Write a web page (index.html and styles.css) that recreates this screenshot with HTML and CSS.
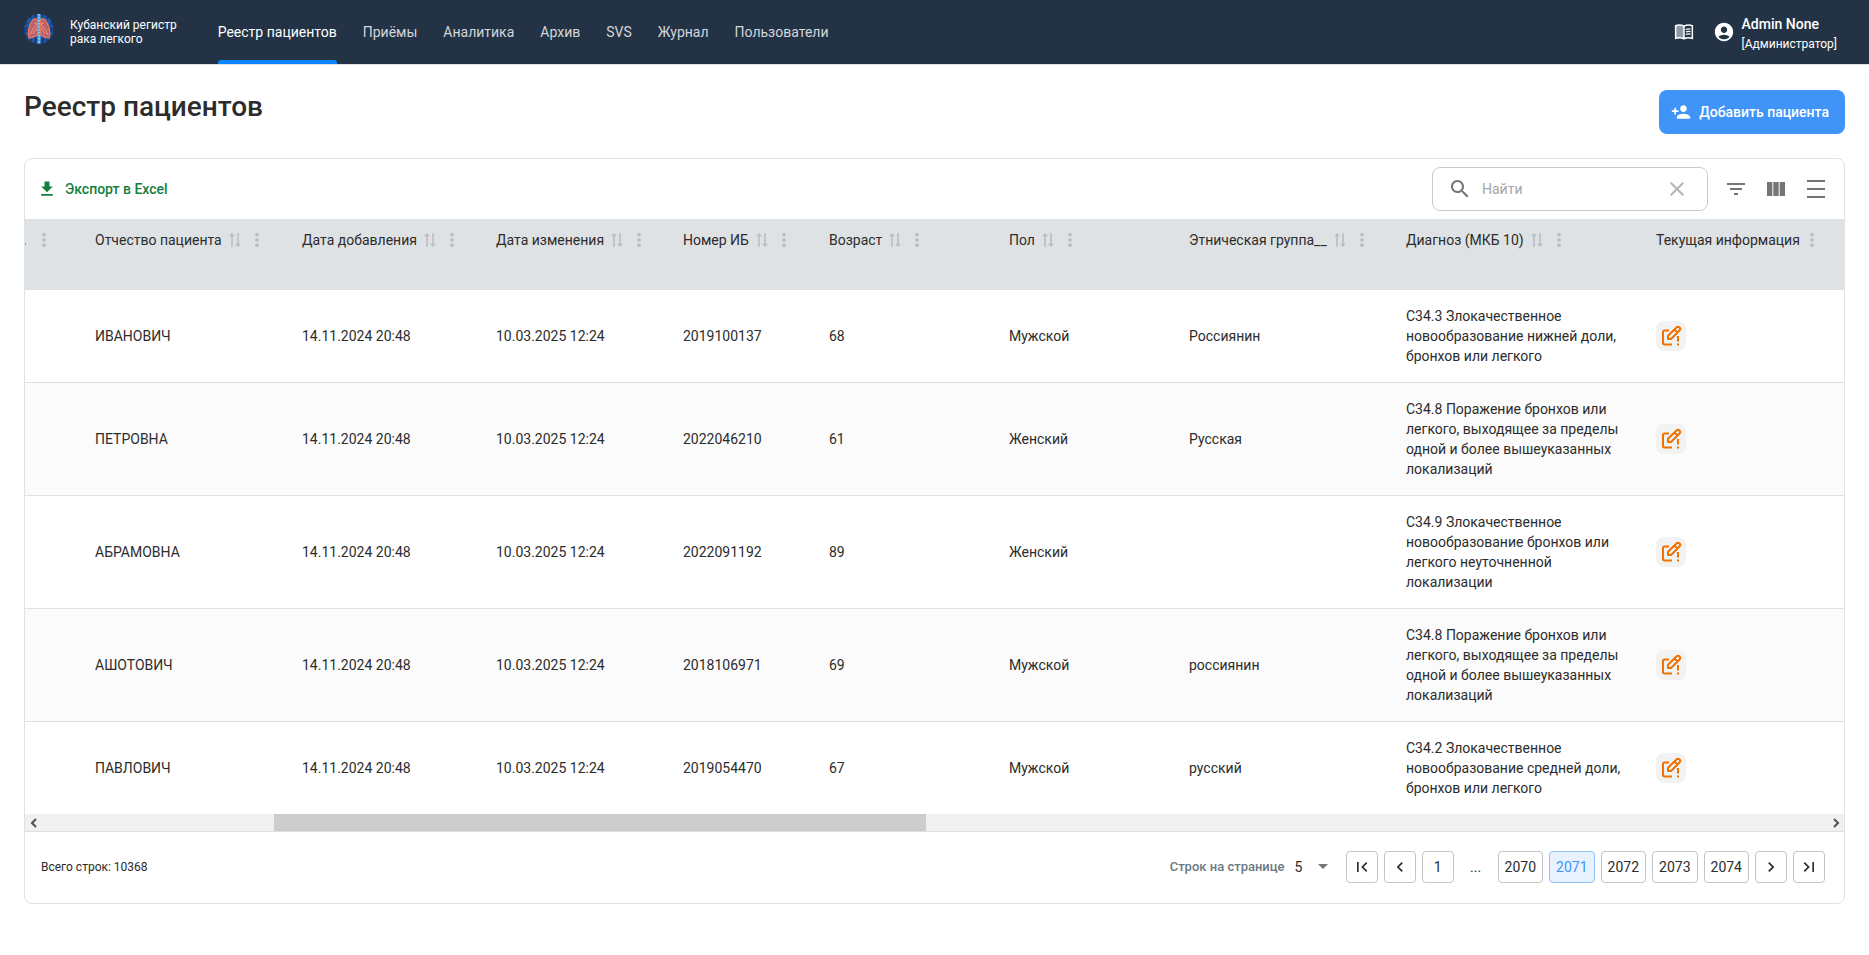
FILE: index.html
```html
<!DOCTYPE html>
<html lang="ru">
<head>
<meta charset="utf-8">
<meta name="viewport" content="width=device-width, initial-scale=1">
<title>Реестр пациентов</title>
<link rel="stylesheet" href="styles.css">
</head>
<body>
<svg class="sprite" aria-hidden="true">
  <symbol id="i-sort" viewBox="0 0 12 16"><path d="M3 15V2M9 1v13" fill="none" stroke="currentColor" stroke-width="1.5"/><path d="M0 4.200 3 1l3 3.200zM6 11.800h6L9 15z" fill="currentColor"/></symbol>
  <symbol id="i-more" viewBox="0 0 24 24"><circle cx="12" cy="5.800" r="2.200"/><circle cx="12" cy="12" r="2.200"/><circle cx="12" cy="18.200" r="2.200"/></symbol>
  <symbol id="i-edit" viewBox="0 0 30 30"><g fill="none" stroke="currentColor" stroke-width="2" stroke-linejoin="round"><path d="M13 9.500H8.500A1.500 1.500 0 0 0 7 11v11a1.500 1.500 0 0 0 1.500 1.500H16M22 15v5.500M22 22.500v2"/><path d="m12 14.700 8.500-8.200a2.100 2.100 0 0 1 3 3L15 18h-3zM18.500 8.500l3 3"/></g></symbol>
  <symbol id="i-left" viewBox="0 0 24 24"><path d="M15.410 7.410 14 6l-6 6 6 6 1.410-1.410L10.830 12z"/></symbol>
  <symbol id="i-right" viewBox="0 0 24 24"><path d="M10 6 8.590 7.410 13.170 12l-4.580 4.590L10 18l6-6z"/></symbol>
</svg>

<header class="topbar">
  <a class="brand" href="#">
    <svg class="logo" viewBox="0 0 30 30" aria-hidden="true">
      <defs><clipPath id="disc"><circle cx="15" cy="15" r="15"/></clipPath></defs>
      <g clip-path="url(#disc)">
        <rect width="30" height="30" fill="#174384"/>
        <path d="M3 8c6-5 18-5 24 0M1 13c7-6 21-6 28 0M2 25c7-3 19-3 26 0M1 20c8-4 20-4 28 0M5 4v23M25 4v23M9 1v28M21 1v28" fill="none" stroke="#2968b3" stroke-width="1.200"/>
        <path d="M15 0v30" stroke="#4f9bdc" stroke-width="3.500"/>
        <path d="M15 0v30" stroke="#9acdf0" stroke-width="1.800" stroke-dasharray="1.500 1.500"/>
        <path d="M12.500 5C8 4 4 13 4.200 21c0 3 2 3.300 4.200 2.200 2.500-1 5-1 5-3.700V7c0-1-.3-1.800-.9-2zM17.500 5c4.500-1 8.500 8 8.300 16 0 3-2 3.300-4.200 2.200-2.500-1-5-1-5-3.700V7c0-1 .3-1.800.9-2z" fill="#b9606e" stroke="#f0765a" stroke-width="1.300"/>
        <path d="m13 10-4 5-3 6M12.500 14 9 20M13 10l-3-1M17 10l4 5 3 6M17.500 14l3.500 6M17 10l3-1" fill="none" stroke="#ff9a70" stroke-width=".9"/>
      </g>
    </svg>
    <span class="brand-name">Кубанский регистр<br>рака легкого</span>
  </a>
  <nav class="nav" aria-label="Основное меню">
    <a class="nav-link active" href="#" aria-current="page">Реестр пациентов</a>
    <a class="nav-link" href="#">Приёмы</a>
    <a class="nav-link" href="#">Аналитика</a>
    <a class="nav-link" href="#">Архив</a>
    <a class="nav-link" href="#">SVS</a>
    <a class="nav-link" href="#">Журнал</a>
    <a class="nav-link" href="#">Пользователи</a>
  </nav>
  <div class="account">
    <button class="bare" type="button" aria-label="Справочник">
      <svg class="ic20" viewBox="0 0 24 24" aria-hidden="true"><path d="M2 4.500c3.500-1.400 7-1.200 10 .4v15c-3-1.500-6.500-1.500-10 0z" fill="#8e99a8"/><path d="M12 5c3.200-1.700 6.700-1.900 10-.5v15.200c-3.300-1.200-6.800-1.200-10 .4-3.200-1.600-6.700-1.600-10-.4V4.500C5.300 3.100 8.800 3.300 12 5zv15" fill="none" stroke="currentColor" stroke-width="1.800"/><path d="M14.200 9c2-.7 3.800-.8 5.600-.4M14.200 12c2-.7 3.800-.8 5.600-.4M14.200 15c2-.7 3.800-.8 5.600-.4" fill="none" stroke="currentColor" stroke-width="1.500"/></svg>
    </button>
    <button class="bare user" type="button">
      <svg class="ic22" viewBox="0 0 24 24" aria-hidden="true"><path fill="currentColor" d="M12 2C6.480 2 2 6.480 2 12s4.480 10 10 10 10-4.480 10-10S17.520 2 12 2zm0 4c1.930 0 3.500 1.570 3.500 3.500S13.930 13 12 13s-3.500-1.570-3.500-3.500S10.070 6 12 6zm0 14c-2.030 0-4.430-.82-6.140-2.880C7.550 15.800 9.680 15 12 15s4.450.8 6.140 2.120C16.430 19.180 14.030 20 12 20z"/></svg>
      <span class="user-text"><span class="user-name">Admin None</span><span class="user-role">[Администратор]</span></span>
    </button>
  </div>
</header>

<main class="page">
  <div class="page-head">
    <h1>Реестр пациентов</h1>
    <button class="primary" type="button">
      <svg class="ic20" viewBox="0 0 24 24" aria-hidden="true"><path fill="currentColor" d="M15 12c2.210 0 4-1.790 4-4s-1.790-4-4-4-4 1.790-4 4 1.790 4 4 4zm-9-2V7H4v3H1v2h3v3h2v-3h3v-2H6zm9 4c-2.670 0-8 1.340-8 4v2h16v-2c0-2.660-5.330-4-8-4z"/></svg>
      Добавить пациента
    </button>
  </div>

  <section class="card">
    <div class="toolbar">
      <button class="export" type="button">
        <svg class="ic20" viewBox="0 0 24 24" aria-hidden="true"><path fill="currentColor" d="M19 9h-4V3H9v6H5l7 7 7-7zM5 18v2h14v-2H5z"/></svg>
        Экспорт в Excel
      </button>
      <div class="tools">
        <div class="search">
          <svg class="ic24" viewBox="0 0 24 24" aria-hidden="true"><path fill="currentColor" d="M15.500 14h-.79l-.28-.27C15.410 12.590 16 11.110 16 9.500 16 5.910 13.090 3 9.500 3S3 5.910 3 9.500 5.910 16 9.500 16c1.610 0 3.090-.59 4.230-1.570l.27.28v.79l5 4.990L20.490 19l-4.990-5zm-6 0C7.010 14 5 11.990 5 9.500S7.010 5 9.500 5 14 7.010 14 9.500 11.990 14 9.500 14z"/></svg>
          <input type="text" placeholder="Найти" aria-label="Найти">
          <button class="bare clear" type="button" aria-label="Очистить"><svg class="ic24" viewBox="0 0 24 24" aria-hidden="true"><path fill="currentColor" d="M19 6.410 17.590 5 12 10.590 6.410 5 5 6.410 10.590 12 5 17.590 6.410 19 12 13.410 17.590 19 19 17.590 13.410 12z"/></svg></button>
        </div>
        <button class="tool" type="button" aria-label="Фильтры"><svg class="ic24" viewBox="0 0 24 24" aria-hidden="true"><path fill="currentColor" d="M10 18h4v-2h-4v2zM3 6v2h18V6H3zm3 7h12v-2H6v2z"/></svg></button>
        <button class="tool" type="button" aria-label="Колонки"><svg class="ic24" viewBox="0 0 24 24" aria-hidden="true"><path fill="currentColor" d="M14.670 5v14H9.330V5h5.340zm1 14H21V5h-5.330v14zm-7.340 0V5H3v14h5.330z"/></svg></button>
        <button class="tool" type="button" aria-label="Плотность"><svg class="ic24" viewBox="0 0 24 24" aria-hidden="true"><path fill="currentColor" d="M3 3h18v2H3zM3 11h18v2H3zM3 19h18v2H3z"/></svg></button>
      </div>
    </div>

    <div class="table-wrap">
      <table>
        <colgroup><col class="c-prev"><col class="c-patronymic"><col class="c-added"><col class="c-changed"><col class="c-number"><col class="c-age"><col class="c-sex"><col class="c-ethnic"><col class="c-diagnosis"><col></colgroup>
        <thead>
          <tr>
            <th class="prev"><div class="th">.<button class="bare dots" type="button" aria-label="Меню колонки"><svg><use href="#i-more"/></svg></button></div></th>
            <th><div class="th">Отчество пациента<button class="bare sort" type="button" aria-label="Сортировать"><svg><use href="#i-sort"/></svg></button><button class="bare dots" type="button" aria-label="Меню колонки"><svg><use href="#i-more"/></svg></button></div></th>
            <th><div class="th">Дата добавления<button class="bare sort" type="button" aria-label="Сортировать"><svg><use href="#i-sort"/></svg></button><button class="bare dots" type="button" aria-label="Меню колонки"><svg><use href="#i-more"/></svg></button></div></th>
            <th><div class="th">Дата изменения<button class="bare sort" type="button" aria-label="Сортировать"><svg><use href="#i-sort"/></svg></button><button class="bare dots" type="button" aria-label="Меню колонки"><svg><use href="#i-more"/></svg></button></div></th>
            <th><div class="th">Номер ИБ<button class="bare sort" type="button" aria-label="Сортировать"><svg><use href="#i-sort"/></svg></button><button class="bare dots" type="button" aria-label="Меню колонки"><svg><use href="#i-more"/></svg></button></div></th>
            <th><div class="th">Возраст<button class="bare sort" type="button" aria-label="Сортировать"><svg><use href="#i-sort"/></svg></button><button class="bare dots" type="button" aria-label="Меню колонки"><svg><use href="#i-more"/></svg></button></div></th>
            <th><div class="th">Пол<button class="bare sort" type="button" aria-label="Сортировать"><svg><use href="#i-sort"/></svg></button><button class="bare dots" type="button" aria-label="Меню колонки"><svg><use href="#i-more"/></svg></button></div></th>
            <th><div class="th">Этническая группа__<button class="bare sort" type="button" aria-label="Сортировать"><svg><use href="#i-sort"/></svg></button><button class="bare dots" type="button" aria-label="Меню колонки"><svg><use href="#i-more"/></svg></button></div></th>
            <th><div class="th">Диагноз (МКБ 10)<button class="bare sort" type="button" aria-label="Сортировать"><svg><use href="#i-sort"/></svg></button><button class="bare dots" type="button" aria-label="Меню колонки"><svg><use href="#i-more"/></svg></button></div></th>
            <th><div class="th">Текущая информация<button class="bare dots" type="button" aria-label="Меню колонки"><svg><use href="#i-more"/></svg></button></div></th>
          </tr>
        </thead>
        <tbody>
          <tr><td></td><td>ИВАНОВИЧ</td><td>14.11.2024 20:48</td><td>10.03.2025 12:24</td><td>2019100137</td><td>68</td><td>Мужской</td><td>Россиянин</td><td>C34.3 Злокачественное новообразование нижней доли, бронхов или легкого</td><td><button class="edit" type="button" aria-label="Редактировать"><svg><use href="#i-edit"/></svg></button></td></tr>
          <tr><td></td><td>ПЕТРОВНА</td><td>14.11.2024 20:48</td><td>10.03.2025 12:24</td><td>2022046210</td><td>61</td><td>Женский</td><td>Русская</td><td>C34.8 Поражение бронхов или легкого, выходящее за пределы одной и более вышеуказанных локализаций</td><td><button class="edit" type="button" aria-label="Редактировать"><svg><use href="#i-edit"/></svg></button></td></tr>
          <tr><td></td><td>АБРАМОВНА</td><td>14.11.2024 20:48</td><td>10.03.2025 12:24</td><td>2022091192</td><td>89</td><td>Женский</td><td></td><td>C34.9 Злокачественное новообразование бронхов или легкого неуточненной локализации</td><td><button class="edit" type="button" aria-label="Редактировать"><svg><use href="#i-edit"/></svg></button></td></tr>
          <tr><td></td><td>АШОТОВИЧ</td><td>14.11.2024 20:48</td><td>10.03.2025 12:24</td><td>2018106971</td><td>69</td><td>Мужской</td><td>россиянин</td><td>C34.8 Поражение бронхов или легкого, выходящее за пределы одной и более вышеуказанных локализаций</td><td><button class="edit" type="button" aria-label="Редактировать"><svg><use href="#i-edit"/></svg></button></td></tr>
          <tr><td></td><td>ПАВЛОВИЧ</td><td>14.11.2024 20:48</td><td>10.03.2025 12:24</td><td>2019054470</td><td>67</td><td>Мужской</td><td>русский</td><td>C34.2 Злокачественное новообразование средней доли, бронхов или легкого</td><td><button class="edit" type="button" aria-label="Редактировать"><svg><use href="#i-edit"/></svg></button></td></tr>
        </tbody>
      </table>
    </div>

    <div class="scrollbar">
      <button class="bare arrow" type="button" aria-label="Прокрутить влево"><svg viewBox="0 0 8 10"><path d="M6 1 2 5l4 4" fill="none" stroke="currentColor" stroke-width="2"/></svg></button>
      <div class="track"><div class="thumb"></div></div>
      <button class="bare arrow" type="button" aria-label="Прокрутить вправо"><svg viewBox="0 0 8 10"><path d="m2 1 4 4-4 4" fill="none" stroke="currentColor" stroke-width="2"/></svg></button>
    </div>

    <footer class="foot">
      <span class="total">Всего строк: 10368</span>
      <div class="pager">
        <label class="per-label" for="per">Строк на странице</label>
        <span class="per"><select id="per"><option>5</option></select><svg class="caret" viewBox="0 0 10 5" aria-hidden="true"><path d="M0 0h10L5 5z" fill="currentColor"/></svg></span>
        <nav class="pages" aria-label="Страницы">
          <button class="pg" type="button" aria-label="Первая страница"><svg viewBox="0 0 24 24"><path d="M18.410 16.590 13.820 12l4.590-4.590L17 6l-6 6 6 6zM6 6h2v12H6z"/></svg></button>
          <button class="pg" type="button" aria-label="Предыдущая страница"><svg><use href="#i-left"/></svg></button>
          <button class="pg num" type="button">1</button>
          <span class="more">...</span>
          <button class="pg num" type="button">2070</button>
          <button class="pg num current" type="button" aria-current="page">2071</button>
          <button class="pg num" type="button">2072</button>
          <button class="pg num" type="button">2073</button>
          <button class="pg num" type="button">2074</button>
          <button class="pg" type="button" aria-label="Следующая страница"><svg><use href="#i-right"/></svg></button>
          <button class="pg" type="button" aria-label="Последняя страница"><svg viewBox="0 0 24 24"><path d="M5.590 7.410 10.180 12l-4.590 4.590L7 18l6-6-6-6zM16 6h2v12h-2z"/></svg></button>
        </nav>
      </div>
    </footer>
  </section>
</main>
</body>
</html>
```

FILE: styles.css
```css
*, *::before, *::after { box-sizing: border-box; }

body {
  margin: 0;
  background: #fff;
  color: #2c2c2c;
  font: 14px/20px Roboto, "Noto Sans", sans-serif;
}

button, input, select { font: inherit; color: inherit; }
button { cursor: pointer; }
a { color: inherit; text-decoration: none; }
svg { display: block; flex: none; }

.sprite { position: absolute; width: 0; height: 0; }
.ic20 { width: 20px; height: 20px; }
.ic22 { width: 22px; height: 22px; }
.ic24 { width: 24px; height: 24px; }

.bare {
  display: flex;
  align-items: center;
  padding: 0;
  border: 0;
  background: none;
}

/* Top bar */
.topbar {
  display: flex;
  align-items: stretch;
  height: 65px;
  padding: 0 32px 0 24px;
  background: #233345;
  border-bottom: 1px solid #dce2e6;
  color: #fff;
}
.brand { display: flex; gap: 16px; margin-right: 41px; }
.logo { width: 30px; height: 30px; margin-top: 14px; }
.brand-name { margin-top: 18px; font-size: 12px; line-height: 14px; }
.nav { display: flex; gap: 26px; }
.nav-link {
  display: flex;
  align-items: center;
  border-bottom: 4px solid transparent;
  padding-top: 4px;
  color: #d3d6da;
}
.nav-link.active {
  position: relative;
  color: #fff;
}
.nav-link.active::after {
  content: "";
  position: absolute;
  inset: auto 0 -4px;
  height: 4px;
  border-radius: 3px 3px 0 0;
  background: #0a84ff;
}
.account { display: flex; gap: 19px; margin-left: auto; }
.user { gap: 7px; text-align: left; }
.user-text { display: flex; flex-direction: column; padding-top: 4px; }
.user-name { font-weight: 500; }
.user-role { font-size: 12px; }

/* Page head */
.page { padding: 25px 24px; }
.page-head {
  display: flex;
  justify-content: space-between;
  align-items: flex-start;
  margin-bottom: 24px;
}
h1 { margin: 0; font-size: 28px; line-height: 34px; font-weight: 500; }
.primary {
  display: flex;
  align-items: center;
  gap: 8px;
  height: 44px;
  padding: 0 16px 0 12px;
  border: 0;
  border-radius: 8px;
  background: #4094f7;
  color: #fff;
  font-weight: 500;
}

/* Card */
.card {
  border: 1px solid #dee2e4;
  border-radius: 8px;
  overflow: hidden;
}
.toolbar {
  display: flex;
  justify-content: space-between;
  align-items: center;
  height: 60px;
  padding: 0 8px 0 12px;
}
.export {
  display: flex;
  align-items: center;
  gap: 8px;
  padding: 0;
  border: 0;
  background: none;
  color: #14803f;
  font-weight: 500;
}
.tools { display: flex; align-items: center; color: #757575; }
.search {
  display: flex;
  align-items: center;
  width: 276px;
  height: 44px;
  margin-right: 8px;
  padding: 0 18px 0 15px;
  border: 1px solid #c9cbcc;
  border-radius: 8px;
}
.search input {
  flex: 1;
  min-width: 0;
  padding: 0 10px;
  border: 0;
  outline: 0;
  background: none;
  color: #2c2c2c;
}
.search input::placeholder { color: #a6a6a6; opacity: 1; }
.clear { color: #b5b5b5; }
.tool {
  display: grid;
  place-items: center;
  width: 40px;
  height: 40px;
  padding: 0;
  border: 0;
  background: none;
}

/* Table */
.table-wrap { overflow: hidden; }
table { width: 100%; table-layout: fixed; border-collapse: collapse; }
.c-prev { width: 54px; }
.c-patronymic { width: 207px; }
.c-added { width: 194px; }
.c-changed { width: 187px; }
.c-number { width: 146px; }
.c-age, .c-sex { width: 180px; }
.c-ethnic { width: 217px; }
.c-diagnosis { width: 250px; }
th {
  height: 71px;
  padding: 11px 0 0 16px;
  background: #dee2e5;
  font-weight: 400;
  text-align: left;
  vertical-align: top;
  white-space: nowrap;
}
th.prev { padding-left: 0; }
.prev .th { margin-left: -2px; }
.th { display: flex; align-items: center; }
.sort, .dots { color: #b9bdc0; }
.sort { margin: 0 6px 0 7px; }
.sort svg { width: 12px; height: 16px; }
.dots svg { width: 20px; height: 20px; fill: currentColor; }
.dots { margin-left: 2px; }
.sort + .dots { margin-left: 0; }
.prev .dots { margin-left: 7px; }
td { padding: 16px; border-bottom: 1px solid #e0e0e0; }
tr:last-child td { border-bottom: 0; }
tbody tr:nth-child(even) { background: #fbfbfb; }
.edit {
  display: block;
  width: 30px;
  height: 30px;
  padding: 0;
  border: 0;
  border-radius: 8px;
  background: #f2f2f2;
  color: #f07000;
}
.edit svg { width: 30px; height: 30px; }

/* Horizontal scrollbar */
.scrollbar { display: flex; height: 17px; background: #f0f0f0; color: #505050; }
.arrow { justify-content: center; width: 17px; }
.arrow svg { width: 8px; height: 10px; }
.track { flex: 1; }
.thumb { width: 36.5%; height: 17px; margin-left: 13%; background: #cdcdcd; }

/* Footer */
.foot {
  display: flex;
  justify-content: space-between;
  align-items: center;
  height: 72px;
  padding: 0 19px 2px 16px;
  border-top: 1px solid #e0e0e0;
}
.total { font-size: 12px; }
.pager { display: flex; align-items: center; }
.per-label { margin-right: 10px; color: #6b7785; font-size: 13px; font-weight: 500; }
.per { display: flex; align-items: center; margin-right: 18px; color: #2c2c2c; }
.per select {
  width: 23px;
  padding: 0;
  border: 0;
  background: none;
  appearance: none;
}
.caret { width: 10px; height: 5px; color: #757575; }
.pages { display: flex; align-items: center; gap: 6px; }
.pg {
  display: grid;
  place-items: center;
  min-width: 32px;
  height: 32px;
  padding: 0 5px;
  border: 1px solid #c2c4c6;
  border-radius: 4px;
  background: #fff;
}
.pg.num { padding: 0 6px; }
.pg svg { width: 20px; height: 20px; fill: currentColor; }
.pg.current { border-color: #90c0fa; background: #e8f2fe; color: #4094f7; }
.more { width: 32px; text-align: center; }
```
